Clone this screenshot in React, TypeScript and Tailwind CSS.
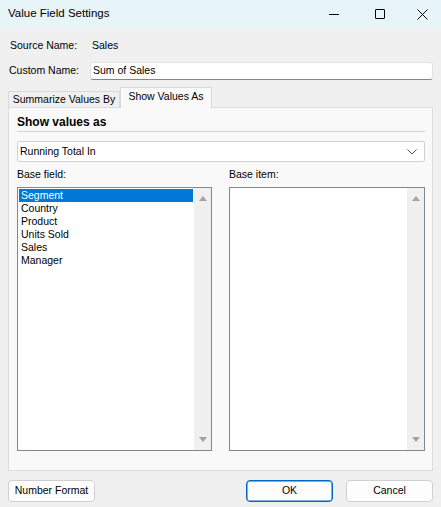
import React from "react";

const baseFields = ["Segment", "Country", "Product", "Units Sold", "Sales", "Manager"];

function ScrollTrack() {
  return (
    <div className="flex w-[17px] shrink-0 flex-col justify-between bg-[#f0f0f0] py-[8px]">
      <div className="mx-auto h-0 w-0 border-x-[4px] border-b-[5px] border-x-transparent border-b-[#a3a3a3]" />
      <div className="mx-auto h-0 w-0 border-x-[4px] border-t-[5px] border-x-transparent border-t-[#a3a3a3]" />
    </div>
  );
}

function ListBox({ items, selected }: { items: string[]; selected?: number }) {
  return (
    <div className="flex h-[264px] border border-[#828790] bg-white">
      <div className="flex-1 p-[1px]">
        {items.map((item, i) => (
          <div
            key={item}
            className={`h-[13px] pl-[2px] leading-[13px] ${
              i === selected ? "bg-[#0078d7] text-white" : "text-black"
            }`}
          >
            {item}
          </div>
        ))}
      </div>
      <ScrollTrack />
    </div>
  );
}

export default function App() {
  return (
    <div className="flex h-[507px] w-[441px] flex-col bg-[#f0f0f0] font-['Liberation_Sans',Arial,sans-serif] text-[10.5px] text-black">
      {/* title bar */}
      <div className="flex h-[28px] shrink-0 items-center bg-[#e8f5f8]">
        <span className="flex-1 pl-[8px] text-[11.5px]">Value Field Settings</span>
        <div className="flex h-full w-[46px] items-center justify-center">
          <div className="h-px w-[10px] bg-black" />
        </div>
        <div className="flex h-full w-[46px] items-center justify-center">
          <div className="h-[10px] w-[10px] rounded-[1px] border border-black" />
        </div>
        <div className="flex h-full w-[38px] items-center justify-center">
          <svg width="11" height="11" viewBox="0 0 11 11" fill="none" stroke="#000" strokeWidth="1">
            <path d="M0.5 0.5L10.5 10.5M10.5 0.5L0.5 10.5" />
          </svg>
        </div>
      </div>

      <div className="flex flex-1 flex-col px-[8px]">
        <div className="mt-[12px] flex h-[12px] items-center">
          <span className="w-[84px] pl-[2px]">Source Name:</span>
          <span>Sales</span>
        </div>

        <div className="mt-[10px] flex items-center">
          <span className="w-[82px] pl-[1px]">Custom Name:</span>
          <div className="flex h-[18px] flex-1 items-center rounded-[3px] border border-[#e3e3e3] border-b-[#868686] bg-white pl-[2px]">
            Sum of Sales
          </div>
        </div>

        {/* tabs */}
        <div className="mt-[7px] flex h-[20px] items-end">
          <div className="flex h-[16px] w-[112px] items-center justify-center border border-b-0 border-[#d9d9d9] bg-[#f0f0f0]">
            Summarize Values By
          </div>
          <div className="relative z-10 -mb-px flex h-[21px] w-[92px] items-center justify-center border border-b-0 border-[#d9d9d9] bg-[#f9f9f9] pb-[2px]">
            Show Values As
          </div>
        </div>

        <div className="flex h-[364px] flex-col border border-[#dcdcdc] bg-[#f9f9f9] pl-[8px] pr-[7px]">
          <div className="mt-[7px] h-[15px] text-[12px] leading-[15px] font-bold">Show values as</div>
          <div className="mt-[1px] h-px bg-[#d4d4d4]" />

          <div className="mt-[9px] flex h-[21px] items-center justify-between rounded-[2px] border border-[#d0d0d0] bg-white pl-[2px] pr-[7px]">
            <span>Running Total In</span>
            <svg width="10" height="6" viewBox="0 0 10 6" fill="none" stroke="#555" strokeWidth="1">
              <path d="M0.5 0.5L5 5L9.5 0.5" />
            </svg>
          </div>

          <div className="mt-[6px] flex gap-[17px]">
            <div className="flex w-[195px] flex-col">
              <span className="h-[13px] leading-[13px]">Base field:</span>
              <div className="mt-[6px]">
                <ListBox items={baseFields} selected={0} />
              </div>
            </div>
            <div className="flex flex-1 flex-col">
              <span className="h-[13px] leading-[13px]">Base item:</span>
              <div className="mt-[6px]">
                <ListBox items={[]} />
              </div>
            </div>
          </div>
        </div>

        {/* buttons */}
        <div className="mt-[9px] flex items-center">
          <button className="h-[22px] w-[87px] rounded-[4px] border border-[#d0d0d0] bg-[#fdfdfd]">
            Number Format
          </button>
          <div className="flex-1" />
          <button className="h-[22px] w-[87px] rounded-[4px] border border-[#0067c0] bg-[#fdfdfd] shadow-[inset_0_0_0_0.5px_#0067c0]">
            OK
          </button>
          <button className="ml-[13px] h-[22px] w-[87px] rounded-[4px] border border-[#d0d0d0] bg-[#fdfdfd]">
            Cancel
          </button>
        </div>
      </div>
    </div>
  );
}
